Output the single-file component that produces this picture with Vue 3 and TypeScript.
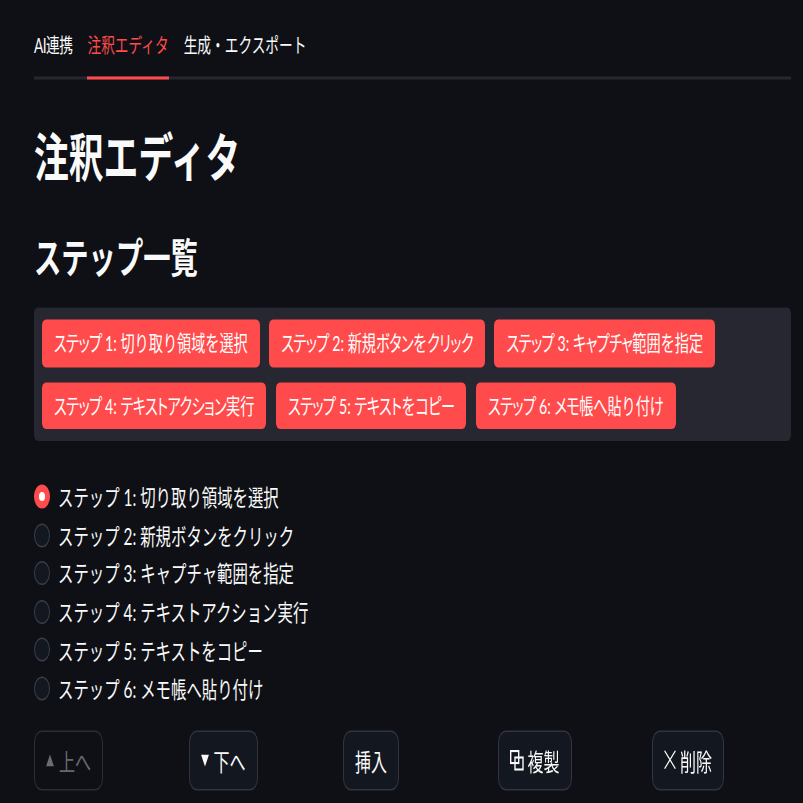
<script setup lang="ts">
const tabs: string[] = ['AI連携', '注釈エディタ', '生成・エクスポート']
const steps: string[] = [
  'ステップ 1: 切り取り領域を選択',
  'ステップ 2: 新規ボタンをクリック',
  'ステップ 3: キャプチャ範囲を指定',
  'ステップ 4: テキストアクション実行',
  'ステップ 5: テキストをコピー',
  'ステップ 6: メモ帳へ貼り付け',
]
// Katakana runs are set tighter than the rest of the chip label.
const chipParts = (s: string): { text: string; kana: boolean }[] =>
  (s.match(/[\u30A0-\u30FF]+|[^\u30A0-\u30FF]+/g) ?? []).map((text) => ({
    text,
    kana: /[\u30A0-\u30FF]/.test(text),
  }))
type Action = { label: string; icon?: 'up' | 'down' | 'copy' | 'close'; disabled?: boolean }
const actions: Action[] = [
  { label: '上へ', icon: 'up', disabled: true },
  { label: '下へ', icon: 'down' },
  { label: '挿入' },
  { label: '複製', icon: 'copy' },
  { label: '削除', icon: 'close' },
]
</script>

<template>
  <div class="frame">
    <div class="page">
      <nav class="tabs">
        <div v-for="(t, i) in tabs" :key="t" class="tab" :class="{ active: i === 1 }">{{ t }}</div>
      </nav>
      <h1 class="title">注釈エディタ</h1>
      <h2 class="subtitle">ステップ一覧</h2>
      <div class="pills">
        <span v-for="s in steps" :key="s" class="pill">
          <span v-for="(p, i) in chipParts(s)" :key="i" :class="{ kana: p.kana }">{{ p.text }}</span>
        </span>
      </div>
      <div class="radios">
        <label v-for="(s, i) in steps" :key="s" class="radio">
          <span class="dot" :class="{ on: i === 0 }"></span>
          <span>{{ s }}</span>
        </label>
      </div>
      <div class="actions">
        <div v-for="a in actions" :key="a.label" class="cell">
          <button class="btn" :disabled="a.disabled">
            <svg v-if="a.icon === 'up'" class="arrow" viewBox="0 0 8 8"><path d="M4 0 8 8H0Z" fill="currentColor" /></svg>
            <svg v-else-if="a.icon === 'down'" class="arrow" viewBox="0 0 8 8"><path d="M0 0H8L4 8Z" fill="currentColor" /></svg>
            <svg v-else-if="a.icon === 'copy'" class="copy" viewBox="0 0 14 14" fill="none" stroke="currentColor" stroke-width="1.4">
              <rect x="0.7" y="0.7" width="8" height="8" />
              <rect x="5" y="5" width="8" height="8" />
            </svg>
            <svg v-else-if="a.icon === 'close'" class="close" viewBox="0 0 12 13" fill="none" stroke="currentColor" stroke-width="1.1">
              <path d="M0.6 0.5 11.4 12.5M11.4 0.5 0.6 12.5" />
            </svg>
            <span>{{ a.label }}</span>
          </button>
        </div>
      </div>
    </div>
  </div>
</template>

<style>
html, body { margin: 0; background: #0e1015; }
</style>

<style scoped>
.frame {
  width: 803px;
  height: 803px;
  overflow: hidden;
}
.page {
  width: 803px;
  height: 535.33px;
  box-sizing: border-box;
  padding: 14px 12px 0 34px;
  transform: scaleY(1.5);
  transform-origin: top left;
  background: #0e1015;
  color: #fafafa;
  font-family: "Lato", "Noto Sans CJK JP", sans-serif;
}
.tabs {
  display: flex;
  gap: 15px;
  height: 37px;
  border-bottom: 2px solid #262730;
}
.tab {
  font-size: 13.7px;
  line-height: 31px;
  height: 37px;
  margin-bottom: -2px;
  border-bottom: 2px solid transparent;
}
.tab:first-child { letter-spacing: -0.5px; }
.tab.active { color: #ff4b4b; border-bottom-color: #ff4b4b; }
.title {
  margin: 30px 0 0;
  font-size: 34.8px;
  line-height: 44px;
  font-weight: 700;
}
.subtitle {
  margin: 23px 0 0;
  font-size: 27.3px;
  line-height: 44px;
  font-weight: 700;
}
.pills {
  margin-top: 11px;
  padding: 8px;
  display: flex;
  flex-wrap: wrap;
  gap: 10px 9.5px;
  background: #262730;
  border-radius: 4px;
  height: 89px;
  box-sizing: border-box;
  align-content: flex-start;
}
.pill {
  height: 31.5px;
  line-height: 31px;
  padding: 0 12px;
  background: #ff4b4b;
  color: #fff;
  border-radius: 4px;
  font-size: 14.15px;
}
.kana {
  font-feature-settings: "palt";
  letter-spacing: -0.55px;
}
.radios { margin-top: 23.5px; display: flex; flex-direction: column; }
.radio {
  display: flex;
  align-items: center;
  gap: 8px;
  height: 25.6px;
  font-size: 15.4px;
}
.dot {
  width: 16px;
  height: 16px;
  margin-top: 1.5px;
  box-sizing: border-box;
  border-radius: 50%;
  background: #131720;
  border: 1px solid #3a3c47;
  display: flex;
  align-items: center;
  justify-content: center;
}
.dot.on { background: #ff4b4b; border-color: #ff4b4b; }
.dot.on::after {
  content: "";
  width: 6px;
  height: 6px;
  border-radius: 50%;
  background: #fff;
}
.actions { margin-top: 15.5px; display: flex; }
.cell { flex: none; width: 154.5px; }
.btn {
  display: inline-flex;
  align-items: center;
  height: 40px;
  padding: 0 11px;
  background: #131720;
  color: #fafafa;
  border: 1px solid #31333f;
  border-radius: 8px;
  font: 400 16px "Lato", "Noto Sans CJK JP", sans-serif;
}
.btn:disabled { background: transparent; color: rgba(250, 250, 250, 0.4); border-color: #2a2c36; }
.arrow { width: 8px; height: 8px; margin-right: 5px; }
.copy { width: 14px; height: 14px; margin-right: 4px; }
.close { width: 12px; height: 13px; margin-right: 4px; }
</style>
